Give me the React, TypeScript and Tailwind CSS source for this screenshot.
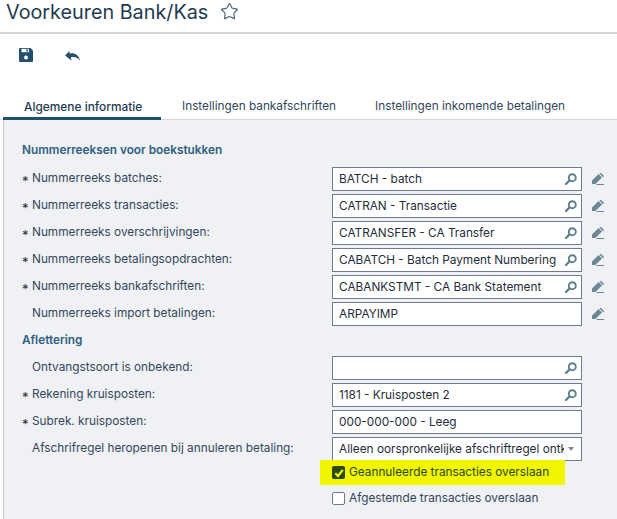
import { Star } from "lucide-react";

type Row = {
  label: string;
  required?: boolean;
  value?: string;
  search?: boolean;
  edit?: boolean;
  select?: boolean;
};

const NUMBER_ROWS: Row[] = [
  { label: "Nummerreeks batches:", required: true, value: "BATCH - batch", search: true, edit: true },
  { label: "Nummerreeks transacties:", required: true, value: "CATRAN - Transactie", search: true, edit: true },
  { label: "Nummerreeks overschrijvingen:", required: true, value: "CATRANSFER - CA Transfer", search: true, edit: true },
  { label: "Nummerreeks betalingsopdrachten:", required: true, value: "CABATCH - Batch Payment Numbering", search: true, edit: true },
  { label: "Nummerreeks bankafschriften:", required: true, value: "CABANKSTMT - CA Bank Statement", search: true, edit: true },
  { label: "Nummerreeks import betalingen:", value: "ARPAYIMP", edit: true },
];

const MATCH_ROWS: Row[] = [
  { label: "Ontvangstsoort is onbekend:", value: "", search: true },
  { label: "Rekening kruisposten:", required: true, value: "1181 - Kruisposten 2", search: true },
  { label: "Subrek. kruisposten:", required: true, value: "000-000-000 - Leeg" },
  { label: "Afschrifregel heropenen bij annuleren betaling:", value: "Alleen oorspronkelijke afschriftregel ontkoppelen", select: true },
];

function SearchIcon() {
  return (
    <svg viewBox="0 0 12 12" className="w-3 h-3 shrink-0 ml-1">
      <circle cx="7.3" cy="4.7" r="3.5" fill="none" stroke="#5f7f8c" strokeWidth="1.9" />
      <path d="M4.6 7.4 1 11" stroke="#5f7f8c" strokeWidth="2.2" strokeLinecap="round" />
    </svg>
  );
}

function PencilIcon() {
  return (
    <svg viewBox="0 0 12 12" className="w-3 h-3 shrink-0 ml-[10px]">
      <path d="M0 7.6 6.6 1l3.4 3.4L3.4 11H0z" fill="#6c8794" />
      <path d="M7.5 0.6 8 0.2a1 1 0 0 1 1.3 0l2.3 2.3a1 1 0 0 1 0 1.3L11 4.3z" fill="#6c8794" />
      <path d="M4.5 11.5H12" stroke="#6c8794" strokeWidth="1" />
    </svg>
  );
}

function FormRow({ row }: { row: Row }) {
  return (
    <div className="flex items-center h-6 mb-[3px]">
      <span className="w-[10px] text-[13px] leading-none text-[#1f2d3a] pt-1">{row.required ? "*" : ""}</span>
      <label className="w-[300px] text-[11.8px] text-[#33475b]">{row.label}</label>
      <div className="w-[250px] h-6 flex items-center bg-white border border-[#6f7a8c] pl-[6px] pr-1 text-[11.8px] text-[#1f2d3a]">
        <span className="flex-1 min-w-0 pt-px overflow-hidden whitespace-nowrap">{row.value}</span>
        {row.search && <SearchIcon />}
        {row.select && (
          <span className="ml-1 mr-[3px] shrink-0 w-0 h-0 border-x-[3.5px] border-x-transparent border-t-[4px] border-t-[#7d8b99]" />
        )}
      </div>
      {row.edit && <PencilIcon />}
    </div>
  );
}

export default function App() {
  return (
    <div className="w-[617px] h-[519px] overflow-hidden bg-white font-['Inter',sans-serif]">
      <div className="h-[34px] border-b-2 border-[#d6d6d6] pl-[6px] flex items-start">
        <h1 className="text-[19.8px] leading-[25px] text-[#1f3a4f]">Voorkeuren Bank/Kas</h1>
        <Star className="w-[19px] h-[19px] ml-3 mt-[2px] text-[#4b6576]" strokeWidth={1.5} />
      </div>

      {/* Toolbar */}
      <div className="h-[59px] pl-[19px] pt-[14px] flex items-start gap-[32px]">
        <svg viewBox="0 0 14 14" className="w-[14px] h-[14px]">
          <path d="M0 1a1 1 0 0 1 1-1h10.5L14 2.5V13a1 1 0 0 1-1 1H1a1 1 0 0 1-1-1z" fill="#24506e" />
          <rect x="2.5" y="0.8" width="7.5" height="3.4" fill="#fff" />
          <rect x="7.4" y="1.2" width="1.4" height="2.4" fill="#24506e" />
          <circle cx="7" cy="9.5" r="2" fill="#fff" />
        </svg>
        <svg viewBox="0 0 15 10" className="w-[15px] h-[10px] mt-[3px]">
          <path d="M0 4.5 4.5 0v2.6C9.5 1.6 13.5 3.5 15 9.5 12.8 6.6 9.5 5.6 5.8 6.2L6.5 9.5z" fill="#24506e" />
        </svg>
      </div>

      {/* Tabs */}
      <div className="h-[27px] pl-[3px] flex items-start border-b border-[#d5d7dd] text-[11.8px] text-[#33475b]">
        <div className="w-[158px] h-[27px] pl-[21px] text-[11.9px] font-medium text-[#1f3a4f] border-b-[3px] border-[#1f4f69] leading-[27px]">
          Algemene informatie
        </div>
        <div className="ml-[21px] leading-[27px]">Instellingen bankafschriften</div>
        <div className="ml-[39px] leading-[27px]">Instellingen inkomende betalingen</div>
      </div>

      <div className="ml-[3px] border-l-[1px] border-[#c9ccd2] bg-[#f0f1f4] h-[399px] pl-[18px] pt-[23px]">
        <h2 className="text-[11.8px] font-semibold text-[#2f5f7f] leading-[15px] mb-[9px]">Nummerreeksen voor boekstukken</h2>
        {NUMBER_ROWS.map((r) => (
          <FormRow key={r.label} row={r} />
        ))}
        <h2 className="text-[11.8px] font-semibold text-[#2f5f7f] leading-[15px] mt-[7px] mb-2">Aflettering</h2>
        {MATCH_ROWS.map((r) => (
          <FormRow key={r.label} row={r} />
        ))}

        <div className="ml-[310px] -mt-1 flex flex-col">
          <div className="-ml-3 w-[245px] h-[25px] bg-[#f2f500] flex items-center pl-3">
            <span className="w-[13px] h-[13px] rounded-[2px] bg-[#2a4a10] flex items-center justify-center">
              <svg viewBox="0 0 10 10" className="w-[10px] h-[10px]">
                <path d="M1.3 5.3 4 8 8.8 1.8" fill="none" stroke="#f2f500" strokeWidth="2.2" />
              </svg>
            </span>
            <span className="ml-1 text-[11.8px] text-[#2a4a10]">Geannuleerde transacties overslaan</span>
          </div>
          <div className="h-[27px] flex items-center">
            <span className="w-[13px] h-[13px] rounded-[2px] bg-white border border-[#6f7a8c]" />
            <span className="ml-1 text-[11.8px] text-[#33475b]">Afgestemde transacties overslaan</span>
          </div>
        </div>
      </div>
    </div>
  );
}
